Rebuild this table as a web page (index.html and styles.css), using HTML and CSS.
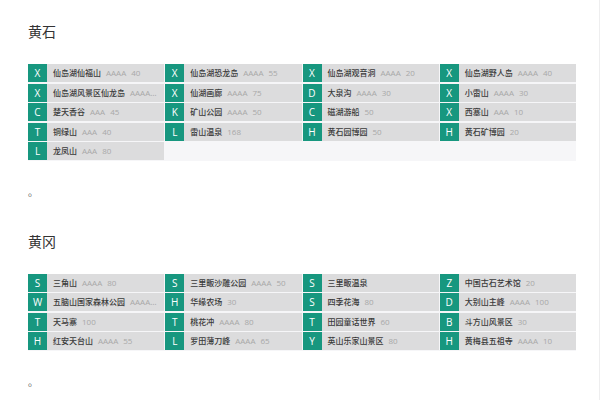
FILE: index.html
```html
<!DOCTYPE html>
<html lang="zh">
<head>
<meta charset="utf-8">
<title>景区</title>
<link rel="stylesheet" href="styles.css">
</head>
<body>
<div class="page">
  <section class="city">
    <h2 class="city-title">黄石</h2>
    <div class="grid">
      <div class="cell"><span class="badge">X</span><span class="info"><span class="name">仙岛湖仙福山</span><span class="meta">AAAA</span><span class="meta">40</span></span></div>
      <div class="cell"><span class="badge">X</span><span class="info"><span class="name">仙岛湖恐龙岛</span><span class="meta">AAAA</span><span class="meta">55</span></span></div>
      <div class="cell"><span class="badge">X</span><span class="info"><span class="name">仙岛湖观音洞</span><span class="meta">AAAA</span><span class="meta">20</span></span></div>
      <div class="cell"><span class="badge">X</span><span class="info"><span class="name">仙岛湖野人岛</span><span class="meta">AAAA</span><span class="meta">40</span></span></div>
      <div class="cell"><span class="badge">X</span><span class="info"><span class="name">仙岛湖风景区仙龙岛</span><span class="meta">AAAA</span><span class="meta">45</span></span></div>
      <div class="cell"><span class="badge">X</span><span class="info"><span class="name">仙湖画廊</span><span class="meta">AAAA</span><span class="meta">75</span></span></div>
      <div class="cell"><span class="badge">D</span><span class="info"><span class="name">大泉沟</span><span class="meta">AAAA</span><span class="meta">30</span></span></div>
      <div class="cell"><span class="badge">X</span><span class="info"><span class="name">小雷山</span><span class="meta">AAAA</span><span class="meta">30</span></span></div>
      <div class="cell"><span class="badge">C</span><span class="info"><span class="name">楚天香谷</span><span class="meta">AAA</span><span class="meta">45</span></span></div>
      <div class="cell"><span class="badge">K</span><span class="info"><span class="name">矿山公园</span><span class="meta">AAAA</span><span class="meta">50</span></span></div>
      <div class="cell"><span class="badge">C</span><span class="info"><span class="name">磁湖游船</span><span class="meta">50</span></span></div>
      <div class="cell"><span class="badge">X</span><span class="info"><span class="name">西塞山</span><span class="meta">AAA</span><span class="meta">10</span></span></div>
      <div class="cell"><span class="badge">T</span><span class="info"><span class="name">铜绿山</span><span class="meta">AAA</span><span class="meta">40</span></span></div>
      <div class="cell"><span class="badge">L</span><span class="info"><span class="name">雷山温泉</span><span class="meta">168</span></span></div>
      <div class="cell"><span class="badge">H</span><span class="info"><span class="name">黄石园博园</span><span class="meta">50</span></span></div>
      <div class="cell"><span class="badge">H</span><span class="info"><span class="name">黄石矿博园</span><span class="meta">20</span></span></div>
      <div class="cell"><span class="badge">L</span><span class="info"><span class="name">龙凤山</span><span class="meta">AAA</span><span class="meta">80</span></span></div>
    </div>
    <p class="end">。</p>
  </section>
  <section class="city">
    <h2 class="city-title">黄冈</h2>
    <div class="grid">
      <div class="cell"><span class="badge">S</span><span class="info"><span class="name">三角山</span><span class="meta">AAAA</span><span class="meta">80</span></span></div>
      <div class="cell"><span class="badge">S</span><span class="info"><span class="name">三里畈沙雕公园</span><span class="meta">AAAA</span><span class="meta">50</span></span></div>
      <div class="cell"><span class="badge">S</span><span class="info"><span class="name">三里畈温泉</span></span></div>
      <div class="cell"><span class="badge">Z</span><span class="info"><span class="name">中国古石艺术馆</span><span class="meta">20</span></span></div>
      <div class="cell"><span class="badge">W</span><span class="info"><span class="name">五脑山国家森林公园</span><span class="meta">AAAA</span><span class="meta">40</span></span></div>
      <div class="cell"><span class="badge">H</span><span class="info"><span class="name">华缘农场</span><span class="meta">30</span></span></div>
      <div class="cell"><span class="badge">S</span><span class="info"><span class="name">四季花海</span><span class="meta">80</span></span></div>
      <div class="cell"><span class="badge">D</span><span class="info"><span class="name">大别山主峰</span><span class="meta">AAAA</span><span class="meta">100</span></span></div>
      <div class="cell"><span class="badge">T</span><span class="info"><span class="name">天马寨</span><span class="meta">100</span></span></div>
      <div class="cell"><span class="badge">T</span><span class="info"><span class="name">桃花冲</span><span class="meta">AAAA</span><span class="meta">80</span></span></div>
      <div class="cell"><span class="badge">T</span><span class="info"><span class="name">田园童话世界</span><span class="meta">60</span></span></div>
      <div class="cell"><span class="badge">B</span><span class="info"><span class="name">斗方山风景区</span><span class="meta">30</span></span></div>
      <div class="cell"><span class="badge">H</span><span class="info"><span class="name">红安天台山</span><span class="meta">AAAA</span><span class="meta">55</span></span></div>
      <div class="cell"><span class="badge">L</span><span class="info"><span class="name">罗田薄刀峰</span><span class="meta">AAAA</span><span class="meta">65</span></span></div>
      <div class="cell"><span class="badge">Y</span><span class="info"><span class="name">英山乐家山景区</span><span class="meta">80</span></span></div>
      <div class="cell"><span class="badge">H</span><span class="info"><span class="name">黄梅县五祖寺</span><span class="meta">AAAA</span><span class="meta">10</span></span></div>
    </div>
    <p class="end">。</p>
  </section>
</div>
</body>
</html>
```

FILE: styles.css
```css
html, body {
  margin: 0;
  padding: 0;
  background: #ffffff;
}

body {
  font-family: "Noto Sans", "Noto Sans CJK SC", sans-serif;
  color: #333333;
  width: 600px;
  height: 400px;
  overflow: hidden;
}

.page {
  box-sizing: border-box;
  width: 600px;
  height: 400px;
  padding: 21px 23px 0 28px;
  border-right: 1px solid #eeeeef;
}

.city-title {
  margin: 0;
  font-size: 14px;
  line-height: 20px;
  font-weight: normal;
  color: #333333;
  font-family: "Noto Sans CJK SC", sans-serif;
}

.grid {
  margin-top: 23px;
  display: grid;
  grid-template-columns: repeat(4, 1fr);
  grid-auto-rows: 18px;
  gap: 1.5px 1px;
  background: #f6f6f8;
  padding-bottom: 0.5px;
}

.cell {
  display: flex;
  align-items: stretch;
  background: #dcdcdd;
  min-width: 0;
}

.badge {
  flex: 0 0 19px;
  display: flex;
  align-items: center;
  justify-content: center;
  background: #17977f;
  color: #ffffff;
  font-family: "Open Sans", "Noto Sans", sans-serif;
  font-size: 10px;
}

.info {
  flex: 1;
  min-width: 0;
  padding: 0 4px 0 6px;
  line-height: 18px;
  font-size: 8px;
  white-space: nowrap;
  overflow: hidden;
  text-overflow: ellipsis;
  color: #a8a8a8;
}

.name {
  color: #3a3a3a;
  font-family: "Noto Sans CJK SC", sans-serif;
  font-weight: 500;
}

.meta {
  margin-left: 5px;
  color: #a8a8a8;
  font-family: "Open Sans", "Noto Sans", sans-serif;
}

.end {
  margin: 24px 0 0 0;
  font-size: 10px;
  line-height: 14px;
  color: #555555;
  font-family: "Noto Sans CJK SC", sans-serif;
}

.city + .city {
  margin-top: 32px;
}
```
